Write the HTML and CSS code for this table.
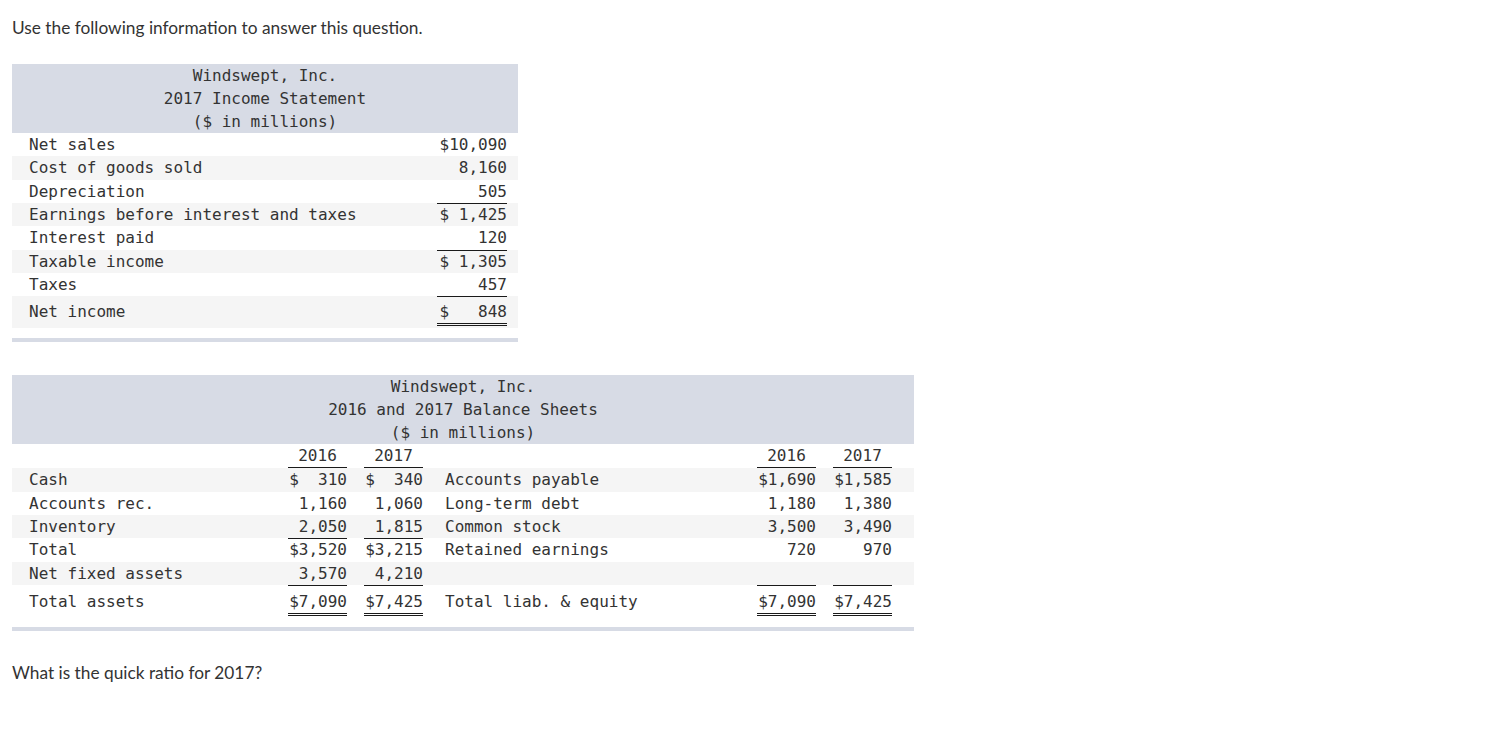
FILE: index.html
```html
<!DOCTYPE html>
<html lang="en">
<head>
<meta charset="utf-8">
<title>Windswept, Inc.</title>
<link rel="stylesheet" href="styles.css">
</head>
<body>
<p class="prompt">Use the following information to answer this question.</p>

<div class="fin is">
  <div class="head">
    <div>Windswept, Inc.</div>
    <div>2017 Income Statement</div>
    <div>($ in millions)</div>
  </div>
  <div class="is-row"><span>Net sales</span><span class="v">$10,090</span></div>
  <div class="is-row alt"><span>Cost of goods sold</span><span class="v">8,160</span></div>
  <div class="is-row"><span>Depreciation</span><span class="v">505</span></div>
  <div class="is-row alt"><span>Earnings before interest and taxes</span><span class="v top">$ 1,425</span></div>
  <div class="is-row"><span>Interest paid</span><span class="v">120</span></div>
  <div class="is-row alt"><span>Taxable income</span><span class="v top">$ 1,305</span></div>
  <div class="is-row"><span>Taxes</span><span class="v">457</span></div>
  <div class="is-row alt last"><span>Net income</span><span class="v top dbl">$   848</span></div>
  <div class="bar"></div>
</div>

<div class="fin bs">
  <div class="head">
    <div>Windswept, Inc.</div>
    <div>2016 and 2017 Balance Sheets</div>
    <div>($ in millions)</div>
  </div>
  <div class="bs-row years">
    <span></span><span class="v c ul">2016</span><span class="v g c ul">2017</span>
    <span></span><span class="v c ul">2016</span><span class="v g c ul">2017</span>
  </div>
  <div class="bs-row alt">
    <span>Cash</span><span class="v">$  310</span><span class="v g">$  340</span>
    <span class="l2">Accounts payable</span><span class="v">$1,690</span><span class="v g">$1,585</span>
  </div>
  <div class="bs-row">
    <span>Accounts rec.</span><span class="v">1,160</span><span class="v g">1,060</span>
    <span class="l2">Long-term debt</span><span class="v">1,180</span><span class="v g">1,380</span>
  </div>
  <div class="bs-row alt">
    <span>Inventory</span><span class="v">2,050</span><span class="v g">1,815</span>
    <span class="l2">Common stock</span><span class="v">3,500</span><span class="v g">3,490</span>
  </div>
  <div class="bs-row">
    <span>Total</span><span class="v top">$3,520</span><span class="v g top">$3,215</span>
    <span class="l2">Retained earnings</span><span class="v">720</span><span class="v g">970</span>
  </div>
  <div class="bs-row alt">
    <span>Net fixed assets</span><span class="v">3,570</span><span class="v g">4,210</span>
    <span class="l2"></span><span class="v"></span><span class="v g"></span>
  </div>
  <div class="bs-row last">
    <span>Total assets</span><span class="v top dbl">$7,090</span><span class="v g top dbl">$7,425</span>
    <span class="l2">Total liab. &amp; equity</span><span class="v top dbl">$7,090</span><span class="v g top dbl">$7,425</span>
  </div>
  <div class="bar"></div>
</div>

<p class="prompt q">What is the quick ratio for 2017?</p>
</body>
</html>
```

FILE: styles.css
```css
html, body {
  margin: 0;
  padding: 0;
  background: #fff;
}

body {
  padding: 18px 12px 0 12px;
}

.prompt {
  margin: 0;
  font-family: Lato, "Open Sans", sans-serif;
  font-size: 17.3px;
  line-height: 20px;
  color: #333;
}

.fin {
  font-family: "DejaVu Sans Mono", "Liberation Mono", monospace;
  font-size: 16px;
  color: #333;
}

.fin .head {
  background: #d7dbe5;
  text-align: center;
  line-height: 23px;
}

.is {
  width: 506px;
  margin-top: 26px;
}

.bs {
  width: 902px;
  margin-top: 33px;
}

.is-row {
  display: grid;
  grid-template-columns: 1fr 70px;
  padding: 0 11px 0 17px;
  line-height: 23.33px;
  height: 23.33px;
}

.bs-row {
  display: grid;
  grid-template-columns: 259px 59px 76px 334px 59px 76px;
  padding: 0 22px 0 17px;
  line-height: 23.33px;
  height: 23.33px;
}

.alt {
  background: #f5f5f5;
}

.v {
  text-align: right;
  white-space: pre;
}

.v.c {
  text-align: center;
}

.v.g {
  margin-left: 17px;
}

.l2 {
  padding-left: 22px;
}

.top {
  box-shadow: inset 0 1px 0 #1a1a1a;
}

.years {
  height: 24px;
  line-height: 23px;
}

.ul {
  box-shadow: inset 0 -1px 0 #1a1a1a;
}

.is-row.last {
  height: auto;
  padding-top: 0;
  padding-bottom: 2px;
}

.bs-row.last {
  height: auto;
  padding-top: 0;
  padding-bottom: 1px;
}

.is-row.last > span {
  padding-top: 4px;
  line-height: 23px;
}

.bs-row.last > span {
  padding-top: 5px;
  line-height: 23px;
}

.dbl {
  border-bottom: 3px double #1a1a1a;
}

.bar {
  height: 4px;
  margin-top: 10px;
  background: #d7dbe5;
}

.q {
  margin-top: 32px;
}
```
